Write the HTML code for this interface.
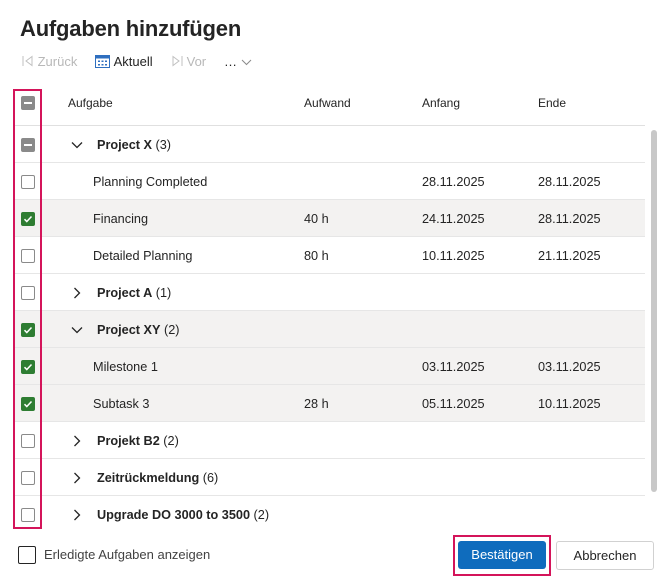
<!DOCTYPE html>
<html><head><meta charset="utf-8"><style>
*{box-sizing:border-box;margin:0;padding:0}
body{width:670px;height:587px;background:#fff;font-family:"Segoe UI","Liberation Sans",sans-serif;color:#242424;position:relative;overflow:hidden;font-size:13px}
.abs{position:absolute}
h1{position:absolute;left:20px;top:16px;font-size:22px;font-weight:600;color:#242424;letter-spacing:-0.2px}
.tb{top:54px;font-size:13px;white-space:nowrap}
.row{position:absolute;left:13px;width:632px;height:37px;border-bottom:1px solid #e6e6e6}
.sel{background:#f3f2f1}
.cb{position:absolute;left:8px;top:12px;width:14px;height:14px;border:1px solid #8a8a8a;border-radius:2px;background:#fff}
.cb.ind{background:#8a8a8a;border-color:#8a8a8a}
.cb.ind:after{content:"";position:absolute;left:2px;top:5px;width:8px;height:2px;background:#fff}
.cb.chk{background:#2e7d32;border-color:#2e7d32}
.t{position:absolute;top:12px;font-size:12.7px;white-space:nowrap}
.g{font-weight:600}
.chev{position:absolute;left:58px;top:13px}
</style></head><body>
<h1>Aufgaben hinzufügen</h1>
<div class="abs tb" style="left:22px;color:#b8b8b8">
<svg width="12" height="12" viewBox="0 0 12 12" style="vertical-align:-1px"><path d="M1 1v10M10 1.5 4 6l6 4.5z" stroke="#c0c0c0" fill="none"/></svg>&nbsp;Zurück</div>
<div class="abs tb" style="left:95px;color:#242424">
<svg width="15" height="13" viewBox="0 0 15 13" style="vertical-align:-2px"><rect x="0.5" y="0.5" width="14" height="12" fill="none" stroke="#2f6fbf"/><rect x="0.5" y="0.5" width="14" height="3" fill="#2f6fbf"/><g fill="#2f6fbf"><rect x="3" y="5.5" width="2" height="1.5"/><rect x="6.5" y="5.5" width="2" height="1.5"/><rect x="10" y="5.5" width="2" height="1.5"/><rect x="3" y="9" width="2" height="1.5"/><rect x="6.5" y="9" width="2" height="1.5"/><rect x="10" y="9" width="2" height="1.5"/></g></svg>&nbsp;Aktuell</div>
<div class="abs tb" style="left:171px;color:#b8b8b8">
<svg width="12" height="12" viewBox="0 0 12 12" style="vertical-align:-1px"><path d="M11 1v10M2 1.5 8 6l-6 4.5z" stroke="#c0c0c0" fill="none"/></svg>&nbsp;Vor</div>
<div class="abs tb" style="left:224px;color:#242424">…&nbsp;<svg width="11" height="7" viewBox="0 0 11 7"><path d="M1 1l4.5 4.5L10 1" stroke="#8a8a8a" fill="none"/></svg></div>

<div class="row" style="top:89px;height:37px;border-bottom:1px solid #e0e0e0"><div class="cb ind" style="top:7px"></div>
<div class="t" style="left:55px;top:7px;font-size:12px">Aufgabe</div>
<div class="t" style="left:291px;top:7px;font-size:12px">Aufwand</div>
<div class="t" style="left:409px;top:7px;font-size:12px">Anfang</div>
<div class="t" style="left:525px;top:7px;font-size:12px">Ende</div></div>

<div class="row" style="top:126px"><div class="cb ind"></div><svg class="chev" width="12" height="12" viewBox="0 0 12 12"><path d="M1 3.5l5 5 5-5" stroke="#242424" stroke-width="1.3" fill="none"/></svg><div class="t g" style="left:84px">Project X<span style="font-weight:400"> (3)</span></div></div>
<div class="row" style="top:163px"><div class="cb"></div><div class="t" style="left:80px">Planning Completed</div><div class="t" style="left:409px">28.11.2025</div><div class="t" style="left:525px">28.11.2025</div></div>
<div class="row sel" style="top:200px"><div class="cb chk"><svg width="12" height="12" viewBox="0 0 12 12" style="position:absolute;left:0;top:0"><path d="M2.5 6.2l2.3 2.3L9.5 3.5" stroke="#fff" stroke-width="1.5" fill="none"/></svg></div><div class="t" style="left:80px">Financing</div><div class="t" style="left:291px">40 h</div><div class="t" style="left:409px">24.11.2025</div><div class="t" style="left:525px">28.11.2025</div></div>
<div class="row" style="top:237px"><div class="cb"></div><div class="t" style="left:80px">Detailed Planning</div><div class="t" style="left:291px">80 h</div><div class="t" style="left:409px">10.11.2025</div><div class="t" style="left:525px">21.11.2025</div></div>
<div class="row" style="top:274px"><div class="cb"></div><svg class="chev" width="12" height="12" viewBox="0 0 12 12"><path d="M3.5 1l5 5-5 5" stroke="#242424" stroke-width="1.3" fill="none"/></svg><div class="t g" style="left:84px">Project A<span style="font-weight:400"> (1)</span></div></div>
<div class="row sel" style="top:311px"><div class="cb chk"><svg width="12" height="12" viewBox="0 0 12 12" style="position:absolute;left:0;top:0"><path d="M2.5 6.2l2.3 2.3L9.5 3.5" stroke="#fff" stroke-width="1.5" fill="none"/></svg></div><svg class="chev" width="12" height="12" viewBox="0 0 12 12"><path d="M1 3.5l5 5 5-5" stroke="#242424" stroke-width="1.3" fill="none"/></svg><div class="t g" style="left:84px">Project XY<span style="font-weight:400"> (2)</span></div></div>
<div class="row sel" style="top:348px"><div class="cb chk"><svg width="12" height="12" viewBox="0 0 12 12" style="position:absolute;left:0;top:0"><path d="M2.5 6.2l2.3 2.3L9.5 3.5" stroke="#fff" stroke-width="1.5" fill="none"/></svg></div><div class="t" style="left:80px">Milestone 1</div><div class="t" style="left:409px">03.11.2025</div><div class="t" style="left:525px">03.11.2025</div></div>
<div class="row sel" style="top:385px"><div class="cb chk"><svg width="12" height="12" viewBox="0 0 12 12" style="position:absolute;left:0;top:0"><path d="M2.5 6.2l2.3 2.3L9.5 3.5" stroke="#fff" stroke-width="1.5" fill="none"/></svg></div><div class="t" style="left:80px">Subtask 3</div><div class="t" style="left:291px">28 h</div><div class="t" style="left:409px">05.11.2025</div><div class="t" style="left:525px">10.11.2025</div></div>
<div class="row" style="top:422px"><div class="cb"></div><svg class="chev" width="12" height="12" viewBox="0 0 12 12"><path d="M3.5 1l5 5-5 5" stroke="#242424" stroke-width="1.3" fill="none"/></svg><div class="t g" style="left:84px">Projekt B2<span style="font-weight:400"> (2)</span></div></div>
<div class="row" style="top:459px"><div class="cb"></div><svg class="chev" width="12" height="12" viewBox="0 0 12 12"><path d="M3.5 1l5 5-5 5" stroke="#242424" stroke-width="1.3" fill="none"/></svg><div class="t g" style="left:84px">Zeitrückmeldung<span style="font-weight:400"> (6)</span></div></div>
<div class="row" style="top:496px;border-bottom:none"><div class="cb"></div><svg class="chev" width="12" height="12" viewBox="0 0 12 12"><path d="M3.5 1l5 5-5 5" stroke="#242424" stroke-width="1.3" fill="none"/></svg><div class="t g" style="left:84px">Upgrade DO 3000 to 3500<span style="font-weight:400"> (2)</span></div></div>

<div class="abs" style="left:651px;top:130px;width:6px;height:362px;background:#c8c8c8;border-radius:3px"></div>
<div class="abs" style="left:13px;top:89px;width:29px;height:440px;border:2px solid #d4145a"></div>

<div class="abs" style="left:18px;top:546px;width:18px;height:18px;border:1px solid #242424;border-radius:2px"></div>
<div class="abs" style="left:44px;top:547px;font-size:13px;color:#424242">Erledigte Aufgaben anzeigen</div>
<div class="abs" style="left:453px;top:535px;width:98px;height:41px;border:2px solid #d4145a"></div>
<div class="abs" style="left:458px;top:541px;width:88px;height:28px;background:#0f6cbd;border-radius:3px;color:#fff;text-align:center;line-height:28px;font-size:13px">Bestätigen</div>
<div class="abs" style="left:556px;top:541px;width:98px;height:29px;border:1px solid #d1d1d1;border-radius:3px;text-align:center;line-height:27px;font-size:13px">Abbrechen</div>
</body></html>
